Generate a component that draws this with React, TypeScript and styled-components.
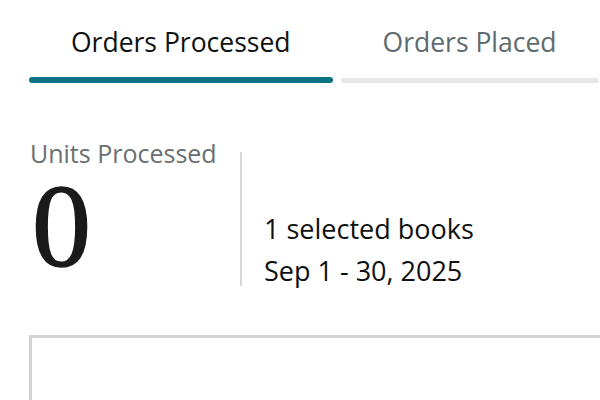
import React from 'react';
import styled, { createGlobalStyle } from 'styled-components';

const GlobalStyle = createGlobalStyle`
  html, body {
    margin: 0;
    padding: 0;
    background: #ffffff;
    overflow: hidden;
  }
  body {
    font-family: 'Open Sans', 'Noto Sans', sans-serif;
    color: #0f1111;
  }
`;

const Page = styled.div`
  width: 600px;
  height: 400px;
  overflow: hidden;
`;

const TabRow = styled.div`
  display: flex;
  gap: 8px;
  padding: 25px 0 0 29px;
`;

const Tab = styled.div<{ $active?: boolean }>`
  display: flex;
  flex-direction: column;
  flex-shrink: 0;
  cursor: pointer;

  span {
    padding: 0 42px;
    font-size: 26.5px;
    line-height: 35px;
    white-space: nowrap;
    color: ${(p) => (p.$active ? '#0f1111' : '#5d6b6e')};
  }
`;

const TabBar = styled.div<{ $active?: boolean }>`
  margin-top: ${(p) => (p.$active ? '17px' : '18px')};
  height: ${(p) => (p.$active ? '6px' : '5px')};
  border-radius: 3px;
  background: ${(p) => (p.$active ? '#0a7384' : '#e6e8e8')};
`;

const StatsRow = styled.div`
  display: flex;
  align-items: flex-start;
  height: 197px;
  padding: 55px 0 0 30px;
`;

const LeftCol = styled.div`
  width: 210px;
  display: flex;
  flex-direction: column;
`;

const Label = styled.div`
  font-size: 25px;
  line-height: 30px;
  color: #6b6f70;
  white-space: nowrap;
`;

const BigNumber = styled.div`
  font-family: 'Liberation Serif', 'DejaVu Serif', serif;
  font-size: 118px;
  line-height: 118px;
  color: #1a1a1a;
  -webkit-text-stroke: 1.6px #1a1a1a;
  margin-left: 2px;
`;

const Divider = styled.div`
  width: 2px;
  height: 134px;
  margin-top: 14px;
  background: #d5d8d8;
`;

const RightCol = styled.div`
  padding: 70px 0 0 22px;
  font-size: 27px;
  line-height: 42px;
  color: #0f1111;
  white-space: nowrap;
`;

const Card = styled.div`
  margin: 0 -20px 0 29px;
  height: 120px;
  border: 3px solid #d2d4d4;
  border-bottom: none;
`;

const App: React.FC = () => {
  return (
    <Page>
      <GlobalStyle />
      <TabRow>
        <Tab $active>
          <span>Orders Processed</span>
          <TabBar $active />
        </Tab>
        <Tab>
          <span>Orders Placed</span>
          <TabBar />
        </Tab>
      </TabRow>
      <StatsRow>
        <LeftCol>
          <Label>Units Processed</Label>
          <BigNumber>0</BigNumber>
        </LeftCol>
        <Divider />
        <RightCol>
          <div>1 selected books</div>
          <div>Sep 1 - 30, 2025</div>
        </RightCol>
      </StatsRow>
      <Card />
    </Page>
  );
};

export default App;
